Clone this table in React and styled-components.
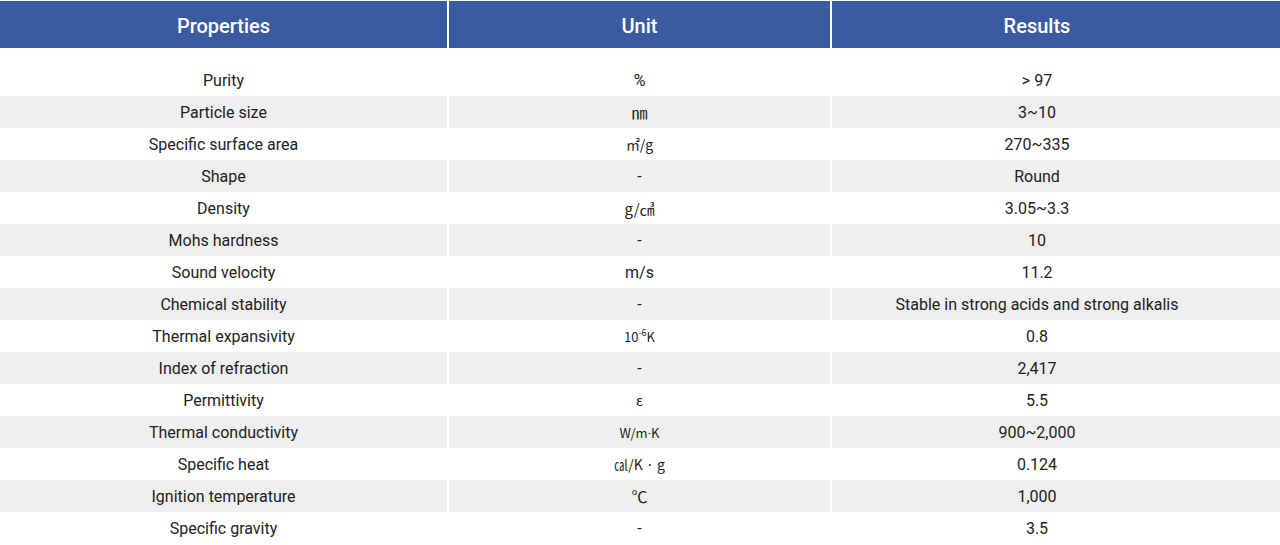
import React from "react";
import styled, { createGlobalStyle } from "styled-components";

const Global = createGlobalStyle`
  html, body { margin: 0; padding: 0; background: #fff; }
  body { font-family: Roboto, "Noto Sans CJK KR", sans-serif; }
`;

const Table = styled.div`
  width: 1280px;
  padding-top: 1px;
  display: flex;
  flex-direction: column;
`;

const Row = styled.div`
  display: grid;
  grid-template-columns: 447px 381px 1fr;
  column-gap: 2px;
  height: ${(p) => (p.$head ? "47px" : "32px")};
  margin-bottom: ${(p) => (p.$head ? "16px" : "0")};

  & > *:last-child {
    padding-right: 38px;
  }
`;

const HeadCell = styled.div`
  background: #3a5ba0;
  color: #fff;
  font-size: 20px;
  font-weight: 500;
  display: flex;
  align-items: center;
  justify-content: center;
  padding-top: 2px;
`;

const Cell = styled.div`
  background: ${(p) => (p.$alt ? "#efefef" : "#fff")};
  color: #222;
  font-size: 16px;
  display: flex;
  align-items: center;
  justify-content: center;
  white-space: nowrap;
`;

const Cjk = styled.span`
  font-family: "Noto Sans CJK KR", sans-serif;
  font-size: ${(p) => p.$size || 14}px;
  color: #222;
`;

const Dot = styled.span`
  font-family: Roboto, sans-serif;
`;

const Sup = styled.sup`
  font-size: 9px;
  vertical-align: 6px;
  line-height: 0;
`;

const rows = [
  ["Purity", "%", "> 97"],
  ["Particle size", <Cjk $size={16}>㎚</Cjk>, "3~10"],
  ["Specific surface area", <Cjk>㎡/g</Cjk>, "270~335"],
  ["Shape", "-", "Round"],
  ["Density", <Cjk $size={15}>g/㎤</Cjk>, "3.05~3.3"],
  ["Mohs hardness", "-", "10"],
  ["Sound velocity", "m/s", "11.2"],
  ["Chemical stability", "-", "Stable in strong acids and strong alkalis"],
  ["Thermal expansivity", <Cjk $size={13}>10<Sup>-6</Sup>K</Cjk>, "0.8"],
  ["Index of refraction", "-", "2,417"],
  ["Permittivity", <Cjk>ε</Cjk>, "5.5"],
  ["Thermal conductivity", <Cjk $size={13}>W/m<Dot>·</Dot>K</Cjk>, "900~2,000"],
  ["Specific heat", <Cjk>㎈/K · g</Cjk>, "0.124"],
  ["Ignition temperature", <Cjk $size={16}>℃</Cjk>, "1,000"],
  ["Specific gravity", "-", "3.5"],
];

export default function App() {
  return (
    <>
      <Global />
      <Table>
        <Row $head>
          <HeadCell>Properties</HeadCell>
          <HeadCell>Unit</HeadCell>
          <HeadCell>Results</HeadCell>
        </Row>
        {rows.map((r, i) => (
          <Row key={i}>
            {r.map((c, j) => (
              <Cell key={j} $alt={i % 2 === 1}>
                {c}
              </Cell>
            ))}
          </Row>
        ))}
      </Table>
    </>
  );
}
